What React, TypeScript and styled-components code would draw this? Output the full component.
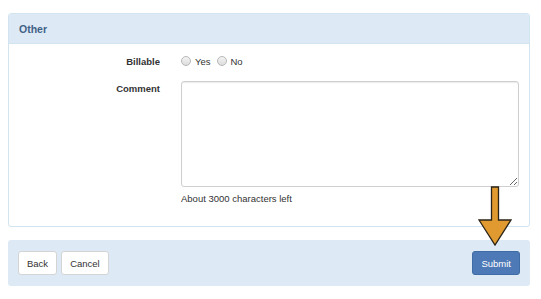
import * as React from "react";
import styled, { createGlobalStyle } from "styled-components";

const GlobalStyle = createGlobalStyle`
  html, body {
    margin: 0;
    padding: 0;
    background: #fff;
  }
  body {
    font-family: "Liberation Sans", Arial, sans-serif;
    font-size: 9.5px;
    color: #333;
  }
`;

const Page = styled.div`
  position: relative;
  width: 541px;
  height: 299px;
  padding: 13px 0 0 8px;
  box-sizing: border-box;
`;

const Panel = styled.section`
  width: 522px;
  box-sizing: border-box;
  border: 1px solid #d3e4f1;
  border-radius: 3px;
  background: #fff;
  overflow: hidden;
`;

const PanelHeading = styled.div`
  height: 30px;
  box-sizing: border-box;
  padding: 0 10px;
  display: flex;
  align-items: center;
  background: #ddeaf5;
  border-bottom: 1px solid #d3e4f1;
  color: #3f6185;
  font-weight: bold;
  font-size: 10.5px;
`;

const PanelBody = styled.div`
  padding: 10px 10px 22px 0;
  display: flex;
  flex-direction: column;
  gap: 13px;
`;

const FormRow = styled.div`
  display: grid;
  grid-template-columns: 151px 1fr;
  column-gap: 21px;
  align-items: ${(p: { top?: boolean }) => (p.top ? "start" : "center")};
`;

const Label = styled.label`
  text-align: right;
  font-weight: bold;
  color: #333;
  padding-top: ${(p: { pad?: number }) => p.pad || 0}px;
`;

const Radios = styled.div`
  display: flex;
  align-items: center;
  height: 14px;
`;

const RadioDot = styled.span`
  width: 8px;
  height: 8px;
  border-radius: 50%;
  border: 1px solid #b8b8b8;
  background: linear-gradient(#f4f4f4, #dcdcdc);
  margin-right: 4px;
  margin-left: ${(p: { first?: boolean }) => (p.first ? "0" : "6px")};
  box-sizing: content-box;
`;

const RadioText = styled.span`
  color: #333;
`;

const Control = styled.div`
  display: flex;
  flex-direction: column;
  gap: 6px;
`;

const TextArea = styled.textarea`
  width: 338px;
  height: 106px;
  box-sizing: border-box;
  border: 1px solid #cfcfcf;
  border-radius: 3px;
  box-shadow: inset 0 1px 1px rgba(0, 0, 0, 0.08);
  resize: both;
  font: inherit;
  margin: 0;
`;

const Hint = styled.div`
  color: #333;
`;

const Footer = styled.div`
  margin-top: 13px;
  width: 522px;
  height: 46px;
  box-sizing: border-box;
  padding: 0 10px;
  background: #ddeaf5;
  border-radius: 3px;
  display: flex;
  align-items: center;
  justify-content: space-between;
`;

const ButtonGroup = styled.div`
  display: flex;
  gap: 4px;
`;

const Button = styled.button`
  height: 24px;
  padding: 0 8px;
  font: inherit;
  font-size: 9.5px;
  border-radius: 3px;
  border: 1px solid ${(p: { primary?: boolean }) => (p.primary ? "#3f6ba6" : "#d4d4d4")};
  background: ${(p: { primary?: boolean }) => (p.primary ? "#4d79b6" : "#fff")};
  color: ${(p: { primary?: boolean }) => (p.primary ? "#fff" : "#333")};
`;

const ArrowMark = styled.svg`
  position: absolute;
  left: 477px;
  top: 186px;
`;

export default function App() {
  return (
    <Page>
      <GlobalStyle />
      <Panel>
        <PanelHeading>Other</PanelHeading>
        <PanelBody>
          <FormRow>
            <Label>Billable</Label>
            <Radios>
              <RadioDot first />
              <RadioText>Yes</RadioText>
              <RadioDot />
              <RadioText>No</RadioText>
            </Radios>
          </FormRow>
          <FormRow top>
            <Label pad={2}>Comment</Label>
            <Control>
              <TextArea />
              <Hint>About 3000 characters left</Hint>
            </Control>
          </FormRow>
        </PanelBody>
      </Panel>
      <Footer>
        <ButtonGroup>
          <Button>Back</Button>
          <Button>Cancel</Button>
        </ButtonGroup>
        <Button primary>Submit</Button>
      </Footer>
      <ArrowMark width="36" height="62" viewBox="0 0 36 62">
        <path
          d="M14.5 1 H21.5 V34 H34 L18 59 L2 34 H14.5 Z"
          fill="#e09a2f"
          stroke="#2b2417"
          strokeWidth="1.3"
          strokeLinejoin="miter"
        />
      </ArrowMark>
    </Page>
  );
}
